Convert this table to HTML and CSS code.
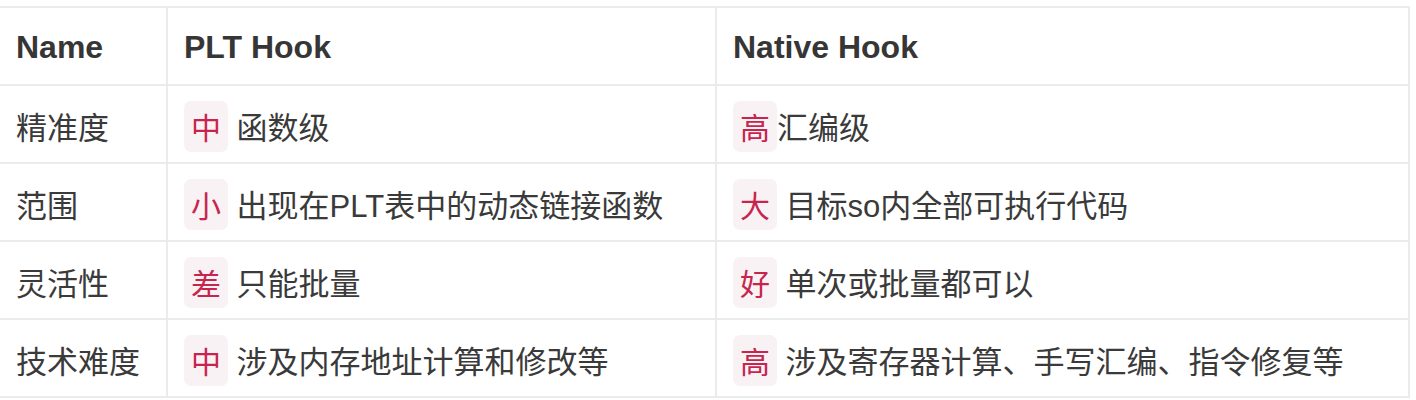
FILE: index.html
```html
<!DOCTYPE html>
<html lang="zh">
<head>
<meta charset="utf-8">
<link rel="stylesheet" href="styles.css">
</head>
<body>
<table class="cmp">
  <colgroup>
    <col class="c1"><col class="c2"><col class="c3">
  </colgroup>
  <thead>
    <tr><th>Name</th><th>PLT Hook</th><th>Native Hook</th></tr>
  </thead>
  <tbody>
    <tr><td>精准度</td><td><code class="tag">中</code> 函数级</td><td><code class="tag">高</code>汇编级</td></tr>
    <tr><td>范围</td><td><code class="tag">小</code> 出现在PLT表中的动态链接函数</td><td><code class="tag">大</code> 目标so内全部可执行代码</td></tr>
    <tr><td>灵活性</td><td><code class="tag">差</code> 只能批量</td><td><code class="tag">好</code> 单次或批量都可以</td></tr>
    <tr><td>技术难度</td><td><code class="tag">中</code> 涉及内存地址计算和修改等</td><td><code class="tag">高</code> 涉及寄存器计算、手写汇编、指令修复等</td></tr>
  </tbody>
</table>
</body>
</html>
```

FILE: styles.css
```css
html, body {
  margin: 0;
  padding: 0;
  background: #ffffff;
}
body {
  font-family: "Liberation Sans", "Noto Sans CJK SC", sans-serif;
  color: #333333;
}
.cmp {
  border-collapse: collapse;
  table-layout: fixed;
  width: 1410px;
  margin: 6px 0 0 -2px;
  font-size: 31px;
}
.c1 { width: 168px; }
.c2 { width: 549px; }
.c3 { width: 693px; }
.cmp th, .cmp td {
  border: 2px solid #ebebeb;
  height: 74px;
  padding: 2px 0 0 16px;
  text-align: left;
  vertical-align: middle;
  white-space: nowrap;
}
.cmp th {
  font-size: 32px;
  font-weight: bold;
  color: #363636;
}
.cmp td {
  font-weight: normal;
  color: #3a3a3a;
}
.tag {
  font-family: "Noto Sans CJK SC", sans-serif;
  font-size: 30px;
  color: #c7254e;
  background: #f9f2f4;
  border-radius: 7px;
  padding: 3px 7px 4px;
}
```
